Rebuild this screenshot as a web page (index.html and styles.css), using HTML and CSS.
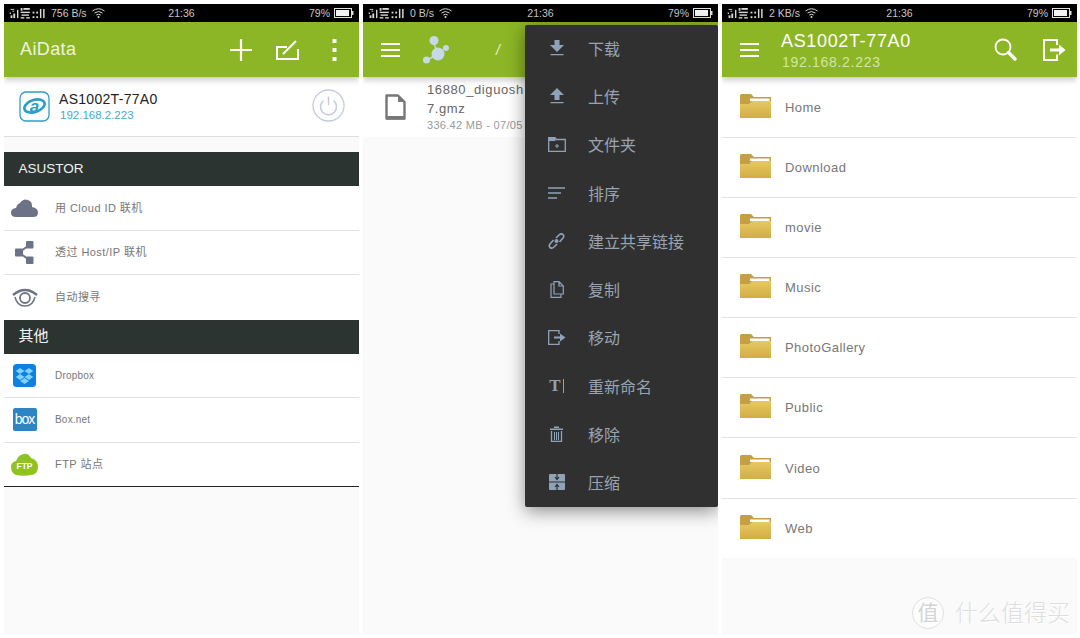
FILE: index.html
```html
<!DOCTYPE html>
<html lang="zh">
<head>
<meta charset="utf-8">
<title>AiData</title>
<link rel="stylesheet" href="styles.css">
</head>
<body>
<svg class="defs" width="0" height="0">
  <defs>
    <linearGradient id="fg" x1="0" y1="0" x2="0" y2="1"><stop offset="0" stop-color="#e6c964"/><stop offset="1" stop-color="#d2ad44"/></linearGradient>
    <symbol id="sig" viewBox="0 0 40 12">
      <g fill="#d8d8d8">
        <rect x="1" y="1" width="4" height="1"/><rect x="3" y="3" width="2" height="1"/><rect x="0" y="5" width="1.5" height="1.5"/>
        <rect x="1" y="8" width="2" height="3"/><rect x="4" y="6" width="2" height="5"/><rect x="8" y="2" width="1.5" height="9"/>
        <rect x="12" y="0" width="2" height="3"/><rect x="15" y="0" width="7" height="2"/><rect x="12" y="4" width="10" height="1.5"/><rect x="13" y="7" width="8" height="1.5"/><rect x="12" y="10" width="4" height="1.5"/><rect x="18" y="10" width="4" height="1.5"/>
        <rect x="25" y="4" width="2" height="2"/><rect x="25" y="9" width="2" height="2"/><rect x="29" y="4" width="2" height="2"/><rect x="29" y="9" width="2" height="2"/><rect x="33" y="1" width="1.6" height="10"/><rect x="36.5" y="1" width="1.6" height="10"/>
      </g>
    </symbol>
    <symbol id="wifi" viewBox="0 0 13 10">
      <g fill="none" stroke="#d8d8d8">
        <path d="M.5 3Q6.500-1.500 12.500 3"/><path d="M2.500 5Q6.500 2 10.500 5"/><path d="M4.300 7Q6.500 5.500 8.700 7"/>
      </g>
      <circle cx="6.500" cy="9" r="1" fill="#d8d8d8"/>
    </symbol>
    <symbol id="batt" viewBox="0 0 20 10">
      <rect x=".5" y=".5" width="17" height="9" fill="none" stroke="#e0e0e0"/>
      <rect x="2" y="2" width="13" height="6" fill="#f2f2f2"/>
      <rect x="18" y="3" width="1.500" height="4" fill="#e0e0e0"/>
    </symbol>
    <symbol id="folder" viewBox="0 0 31 24">
      <path d="M0 1.500Q0 0 1.500 0H11l3 3H31V24H0Z" fill="#c4a042"/>
      <rect x="10" y="4.500" width="19.500" height="2.500" fill="#fff"/>
      <path d="M0 10H9l3-3H31V24H0Z" fill="url(#fg)"/>
    </symbol>
    <symbol id="burger" viewBox="0 0 19 14">
      <g fill="#fff"><rect width="19" height="2"/><rect y="6" width="19" height="2"/><rect y="12" width="19" height="2"/></g>
    </symbol>
  </defs>
</svg>

<main class="screens">

  <section class="phone">
    <div class="status">
      <div class="status-left"><svg class="sig"><use href="#sig"/></svg><span>756 B/s</span><svg class="wifi"><use href="#wifi"/></svg></div>
      <div class="status-time">21:36</div>
      <div class="status-right"><span>79%</span><svg class="batt"><use href="#batt"/></svg></div>
    </div>
    <header class="appbar appbar-home">
      <h1 class="brand">AiData</h1>
      <div class="actions-home">
        <svg width="22" height="22" viewBox="0 0 22 22"><path d="M11 0V22M0 11H22" stroke="#fff" stroke-width="2.200"/></svg>
        <svg width="23" height="21" viewBox="0 0 23 21"><path d="M11 8H1V20H22V10" fill="none" stroke="#fff" stroke-width="2"/><path d="M7 15L20 2" stroke="#fff" stroke-width="2"/></svg>
        <svg class="dots" width="5" height="22" viewBox="0 0 5 22"><g fill="#fff"><rect x=".5" width="4" height="4"/><rect x=".5" y="9" width="4" height="4"/><rect x=".5" y="18" width="4" height="4"/></g></svg>
      </div>
    </header>
    <div class="device">
      <svg class="device-logo" width="31" height="31" viewBox="0 0 31 31">
        <rect x="1" y="1" width="29" height="29" rx="6" fill="#fff" stroke="#2b9ec8" stroke-width="1.300"/>
        <ellipse cx="15.500" cy="15" rx="10.500" ry="6" fill="none" stroke="#2b9ec8" stroke-width="2.600" transform="rotate(-18 15.500 15)"/>
        <text x="15.500" y="21" class="logo-a">a</text>
      </svg>
      <div class="device-text">
        <div class="device-name">AS1002T-77A0</div>
        <div class="device-ip">192.168.2.223</div>
      </div>
      <svg class="device-power" width="33" height="33" viewBox="0 0 33 33"><circle cx="16.500" cy="16.500" r="15.500" fill="none" stroke="#c3cbdd" stroke-width="1.300"/><path d="M11.500 11.500a8 8 0 1 0 10 0M16.500 7.500V16" fill="none" stroke="#c3cbdd" stroke-width="1.500"/></svg>
    </div>

    <h2 class="band band-first">ASUSTOR</h2>
    <div class="row">
      <span class="row-icon"><svg width="27" height="18" viewBox="0 0 27 18"><path d="M5 18Q0 18 0 13.500 0 9.500 5 9 6 5 9 4 13-2 19 2 21.500 4 21 8 27 9 27 13.500 27 18 22 18Z" fill="#6d7387"/></svg></span>
      <span class="row-label">用 Cloud ID 联机</span>
    </div>
    <div class="row">
      <span class="row-icon"><svg width="19" height="23" viewBox="0 0 19 23"><path d="M4 11.500L15 3.500M4 11.500L15 19.500" stroke="#6d7387" stroke-width="2"/><g fill="#6d7387"><rect y="7.500" width="8" height="8" rx="1"/><rect x="11" width="7.500" height="7.500" rx="1"/><rect x="11" y="15.500" width="7.500" height="7.500" rx="1"/></g></svg></span>
      <span class="row-label">透过 Host/IP 联机</span>
    </div>
    <div class="row row-last">
      <span class="row-icon"><svg width="26" height="19" viewBox="0 0 26 19"><path d="M1 7Q13-3 25 7" fill="none" stroke="#6d7387" stroke-width="2.400"/><path d="M3 9Q5 18 13 18 21 18 23 9" fill="none" stroke="#6d7387" stroke-width="1.500"/><circle cx="13" cy="10" r="5" fill="none" stroke="#6d7387" stroke-width="1.800"/></svg></span>
      <span class="row-label">自动搜寻</span>
    </div>

    <h2 class="band band-cjk">其他</h2>
    <div class="row">
      <span class="row-icon"><svg width="23" height="23" viewBox="0 0 23 23"><rect width="23" height="23" rx="3.500" fill="#0d80e2"/><path d="M7 4l4.500 3L7 10 2.800 7ZM16 4l4.200 3L16 10l-4.500-3ZM7 10l4.500 3L7 16l-4.200-3ZM16 10l4.200 3L16 16l-4.500-3Z" fill="#7fd0fa"/><path d="M7 17l4.500-3 4.500 3-4.500 3Z" fill="#7fd0fa"/></svg></span>
      <span class="row-label row-label-small">Dropbox</span>
    </div>
    <div class="row">
      <span class="row-icon"><span class="box-logo">box</span></span>
      <span class="row-label row-label-small">Box.net</span>
    </div>
    <div class="row row-end">
      <span class="row-icon"><span class="ftp-logo"><svg width="27" height="23" viewBox="0 0 27 23"><path d="M5 22Q0 20 0 14 0 9 5 8 8 1 13 1 17 0 20 5 27 7 27 14 27 21 20 22 13 23.500 5 22Z" fill="#8fc31f"/><text x="13.500" y="15.500" class="ftp-text">FTP</text></svg></span></span>
      <span class="row-label">FTP 站点</span>
    </div>
  </section>

  <section class="phone">
    <div class="status">
      <div class="status-left"><svg class="sig"><use href="#sig"/></svg><span>0 B/s</span><svg class="wifi"><use href="#wifi"/></svg></div>
      <div class="status-time">21:36</div>
      <div class="status-right"><span>79%</span><svg class="batt"><use href="#batt"/></svg></div>
    </div>
    <header class="appbar appbar-files">
      <svg class="burger"><use href="#burger"/></svg>
      <svg class="node-logo" width="28" height="30" viewBox="0 0 28 30"><path d="M4 25L15 19M10 6L15 19M15 19L22 13" stroke="#c7d8e6" stroke-width="1.500"/><g fill="#c7d8e6"><circle cx="11" cy="5.500" r="4.500"/><circle cx="15" cy="19" r="6.500"/><circle cx="23" cy="13" r="3"/><circle cx="3.500" cy="25" r="3.500"/></g></svg>
      <span class="crumb">/</span>
    </header>
    <div class="file">
      <svg class="file-icon" width="21" height="26" viewBox="0 0 21 26"><path d="M1.500 1.500H13L19.500 8V24.500H1.500Z" fill="#fff" stroke="#777" stroke-width="2.400" stroke-linejoin="round"/><path d="M13 1V8H20" fill="#777"/><rect x="1" y="22" width="19" height="3.500" fill="#777"/></svg>
      <div class="file-text">
        <div class="file-name">16880_diguosh<br>7.gmz</div>
        <div class="file-meta">336.42 MB - 07/05</div>
      </div>
    </div>
    <nav class="menu">
      <div class="menu-item"><span class="menu-icon"><svg width="16" height="16" viewBox="0 0 16 16"><path d="M5.500 0H10.500V5H15L8 12 1 5H5.500ZM1.500 14H14.500V15.300H1.500Z" fill="#8fa2b8"/></svg></span><span>下载</span></div>
      <div class="menu-item"><span class="menu-icon"><svg width="16" height="16" viewBox="0 0 16 16"><path d="M5.500 12H10.500V7H15L8 0 1 7H5.500ZM1.500 14H14.500V15.300H1.500Z" fill="#8fa2b8"/></svg></span><span>上传</span></div>
      <div class="menu-item"><span class="menu-icon"><svg width="18" height="15" viewBox="0 0 18 15"><path d="M.7 14.300V.7H7L8.500 2.500H17.300V14.300Z" fill="none" stroke="#8fa2b8" stroke-width="1.300"/><path d="M.7 1H7.500V4H.7Z" fill="#8fa2b8"/><path d="M9 7V11M7 9H11" stroke="#8fa2b8"/></svg></span><span>文件夹</span></div>
      <div class="menu-item"><span class="menu-icon"><svg width="17" height="12" viewBox="0 0 17 12"><path d="M0 1H17M0 6H13M0 11H9" stroke="#8fa2b8" stroke-width="1.300"/></svg></span><span>排序</span></div>
      <div class="menu-item"><span class="menu-icon"><svg width="17" height="16" viewBox="0 0 17 16"><path d="M5.500 7L2 11Q.5 13 2 14.500 4 16 6 14L9 11M11.500 9L15 5Q16.500 3 15 1.500 13 0 11 2L8 5" fill="none" stroke="#8fa2b8" stroke-width="1.600"/><circle cx="8.500" cy="8" r="2" fill="#8fa2b8"/></svg></span><span>建立共享链接</span></div>
      <div class="menu-item"><span class="menu-icon"><svg width="14" height="17" viewBox="0 0 14 17"><path d="M4 .7H9L13.300 5V13H4ZM9 1V5H13" fill="none" stroke="#8fa2b8" stroke-width="1.200"/><path d="M4 3H1V16.300H11V13" fill="none" stroke="#8fa2b8" stroke-width="1.200"/></svg></span><span>复制</span></div>
      <div class="menu-item"><span class="menu-icon"><svg width="18" height="15" viewBox="0 0 18 15"><path d="M11 4V.7H.7V14.300H11V11" fill="none" stroke="#8fa2b8" stroke-width="1.300"/><path d="M6 6.500H12V3.500L17.500 7.500 12 11.500V8.500H6Z" fill="#8fa2b8"/></svg></span><span>移动</span></div>
      <div class="menu-item"><span class="menu-icon menu-rename"><span class="rename-t">T</span><span class="rename-bar"></span></span><span>重新命名</span></div>
      <div class="menu-item"><span class="menu-icon"><svg width="13" height="16" viewBox="0 0 13 16"><path d="M0 2.500H13V4H0ZM4 2V.5H9V2Z" fill="#8fa2b8"/><path d="M1.500 5V15.300H11.500V5" fill="none" stroke="#8fa2b8" stroke-width="1.300"/><path d="M4.500 6V14M6.500 6V14M8.500 6V14" stroke="#8fa2b8"/></svg></span><span>移除</span></div>
      <div class="menu-item"><span class="menu-icon"><svg width="16" height="16" viewBox="0 0 16 16"><rect width="16" height="16" rx="1" fill="#8fa2b8"/><path d="M0 8H16M8 0V5.500M8 10.500V16M6 3L8 5.500 10 3M6 13L8 10.500 10 13" fill="none" stroke="#303030" stroke-width="1.200"/></svg></span><span>压缩</span></div>
    </nav>
  </section>

  <section class="phone">
    <div class="status">
      <div class="status-left"><svg class="sig"><use href="#sig"/></svg><span>2 KB/s</span><svg class="wifi"><use href="#wifi"/></svg></div>
      <div class="status-time">21:36</div>
      <div class="status-right"><span>79%</span><svg class="batt"><use href="#batt"/></svg></div>
    </div>
    <header class="appbar appbar-nas">
      <svg class="burger"><use href="#burger"/></svg>
      <div class="nas-title">
        <div class="nas-name">AS1002T-77A0</div>
        <div class="nas-ip">192.168.2.223</div>
      </div>
      <svg class="nas-search" width="23" height="23" viewBox="0 0 23 23"><circle cx="9" cy="9" r="7.500" fill="none" stroke="#fff" stroke-width="1.800"/><path d="M14.500 14.500L21 21" stroke="#fff" stroke-width="3.400" stroke-linecap="round"/></svg>
      <svg class="nas-exit" width="23" height="22" viewBox="0 0 23 22"><path d="M14 6V1H1V21H14V15.500" fill="none" stroke="#fff" stroke-width="2"/><path d="M7 9.500H16V5.500L22.500 11 16 16.500V12.500H7Z" fill="#fff"/></svg>
    </header>
    <div class="folder folder-first"><svg class="folder-icon"><use href="#folder"/></svg><span>Home</span></div>
    <div class="folder"><svg class="folder-icon"><use href="#folder"/></svg><span>Download</span></div>
    <div class="folder"><svg class="folder-icon"><use href="#folder"/></svg><span>movie</span></div>
    <div class="folder"><svg class="folder-icon"><use href="#folder"/></svg><span>Music</span></div>
    <div class="folder"><svg class="folder-icon"><use href="#folder"/></svg><span>PhotoGallery</span></div>
    <div class="folder"><svg class="folder-icon"><use href="#folder"/></svg><span>Public</span></div>
    <div class="folder"><svg class="folder-icon"><use href="#folder"/></svg><span>Video</span></div>
    <div class="folder folder-last"><svg class="folder-icon"><use href="#folder"/></svg><span>Web</span></div>
  </section>

</main>

<div class="watermark">
  <span class="wm-seal">值</span>
  <span class="wm-text">什么值得买</span>
</div>
</body>
</html>
```
FILE: styles.css
```css
* { box-sizing: border-box; }

html, body {
  margin: 0;
  height: 638px;
  overflow: hidden;
  background: #fff;
  font-family: "Liberation Sans", "Noto Sans CJK SC", sans-serif;
}

.defs { position: absolute; }

.screens {
  display: flex;
  gap: 4px;
  padding: 4px 3px 4px 4px;
  height: 638px;
}

.phone {
  position: relative;
  width: 355px;
  height: 630px;
  overflow: hidden;
  background: #fafafa;
}

/* status bar */
.status {
  height: 18px;
  background: #000;
  color: #c8c8c8;
  font-size: 10.500px;
  display: grid;
  grid-template-columns: 1fr auto 1fr;
  align-items: center;
  padding: 0 5px;
}
.status-left { display: flex; align-items: center; gap: 4px; }
.status-right { display: flex; align-items: center; justify-content: flex-end; gap: 4px; }
.sig { width: 38px; height: 11px; }
.wifi { width: 13px; height: 10px; margin-left: 1px; }
.batt { width: 20px; height: 10px; }

/* app bars */
.appbar {
  position: relative;
  z-index: 1;
  height: 55px;
  background: #8cb625;
  box-shadow: 0 3px 6px rgba(0, 0, 0, .22);
  display: flex;
  align-items: center;
  color: #fff;
}
.burger { width: 19px; height: 14px; flex: none; }

.appbar-home { padding: 0 22px 0 16px; justify-content: space-between; }
.brand { margin: 0; font-size: 18px; font-weight: 400; color: #eef4dc; letter-spacing: .4px; }
.actions-home { display: flex; align-items: center; gap: 24px; }
.actions-home .dots { margin-left: 9px; }

.appbar-files { padding-left: 18px; }
.node-logo { margin-left: 23px; }
.crumb { margin-left: 45px; font-size: 14px; font-style: italic; color: #eaf2d2; }

.appbar-nas { padding: 0 11px 0 18px; }
.nas-title { margin-left: 22px; flex: 1; padding-top: 2px; }
.nas-name { font-size: 18px; letter-spacing: .65px; line-height: 22px; }
.nas-ip { font-size: 14px; letter-spacing: .7px; color: #d4e4a8; line-height: 20px; padding-left: 1px; }
.nas-search { margin-right: 26px; }

/* home list */
.device {
  height: 60px;
  background: #fff;
  border-bottom: 1px solid #dedede;
  display: flex;
  align-items: center;
  padding: 0 14px 0 15px;
}
.device-text { flex: 1; margin-left: 9px; }
.device-name { font-size: 14px; color: #222; line-height: 17px; letter-spacing: .3px; }
.device-ip { font-size: 11.500px; color: #45abc4; line-height: 15px; padding-left: 1px; }
.device-power { margin-bottom: 2px; }
.logo-a { font: italic 700 17px "Liberation Sans", sans-serif; fill: #2b9ec8; text-anchor: middle; }

.band {
  margin: 0;
  height: 34px;
  background: #2c3431;
  color: #f2f2f2;
  font-size: 13.500px;
  font-weight: 400;
  line-height: 33px;
  padding-left: 14.500px;
}
.band-first { margin-top: 15px; }
.band-cjk { font-size: 15px; line-height: 31px; }

.row {
  height: 44.500px;
  background: #fff;
  border-bottom: 1px solid #e2e2e6;
  display: flex;
  align-items: center;
  color: #777;
  font-size: 11px;
}
.row-last { border-bottom: 0; }
.row-end { border-bottom: 1px solid #222; }
.row-icon { width: 51px; flex: none; display: flex; justify-content: center; padding-right: 10px; }
.row-label { letter-spacing: .45px; padding-bottom: 2px; }
.row-label-small { font-size: 10px; letter-spacing: .2px; padding-bottom: 0; }

.box-logo {
  width: 24px;
  height: 23px;
  border-radius: 2px;
  background: #2d85c4;
  color: #fff;
  font-size: 14px;
  line-height: 22px;
  letter-spacing: -1px;
  text-align: center;
}
.ftp-logo { display: flex; }
.ftp-text { font: 700 8.500px "Liberation Sans", sans-serif; fill: #fff; text-anchor: middle; }

/* file list behind the menu */
.file {
  height: 60px;
  background: #fff;
  display: flex;
  align-items: center;
  padding-left: 22px;
}
.file-icon { flex: none; }
.file-text { margin-left: 21px; white-space: nowrap; padding-bottom: 2px; }
.file-name { font-size: 13px; line-height: 19px; color: #666; letter-spacing: .6px; }
.file-meta { font-size: 11px; line-height: 15px; color: #9a9a9a; letter-spacing: .3px; }

/* overflow menu */
.menu {
  position: absolute;
  z-index: 2;
  left: 162px;
  top: 21px;
  width: 193px;
  height: 482px;
  background: #303030;
  border-radius: 2px;
  box-shadow: 0 4px 18px rgba(0, 0, 0, .45);
  color: #98a4b0;
  font-size: 16px;
}
.menu-item { height: 48.300px; display: flex; align-items: center; }
.menu-item:first-child { margin-top: -1.500px; }
.menu-icon { width: 63px; flex: none; display: flex; justify-content: center; }
.menu-rename { align-items: center; gap: 2px; }
.rename-t { font: 700 17px "Liberation Serif", serif; color: #8fa2b8; }
.rename-bar { width: 1px; height: 14px; background: #8fa2b8; }

/* folders */
.folder {
  height: 60.100px;
  background: #fff;
  border-bottom: 1px solid #e2e2e2;
  display: flex;
  align-items: center;
  padding: 0 0 0 18px;
  color: #777;
  font-size: 13px;
  letter-spacing: .45px;
}
.folder-first { height: 61px; padding-top: 1px; }
.folder-last { height: 59.700px; padding-top: 1px; border-bottom: 0; }
.folder-icon { width: 31px; height: 24px; margin-right: 14px; margin-bottom: 3px; flex: none; }

/* watermark */
.watermark {
  position: absolute;
  left: 912px;
  top: 597px;
  display: flex;
  align-items: center;
  gap: 11px;
  color: #dedede;
  text-shadow: 1px 1px 0 #fff;
}
.wm-seal {
  width: 32px;
  height: 32px;
  border-radius: 50%;
  border: 1px solid #e0e0e0;
  background: #fdfdfd;
  font-size: 21px;
  line-height: 29px;
  text-align: center;
  color: #d4d4d4;
}
.wm-text { font-size: 23px; font-weight: 300; line-height: 30px; }
```
